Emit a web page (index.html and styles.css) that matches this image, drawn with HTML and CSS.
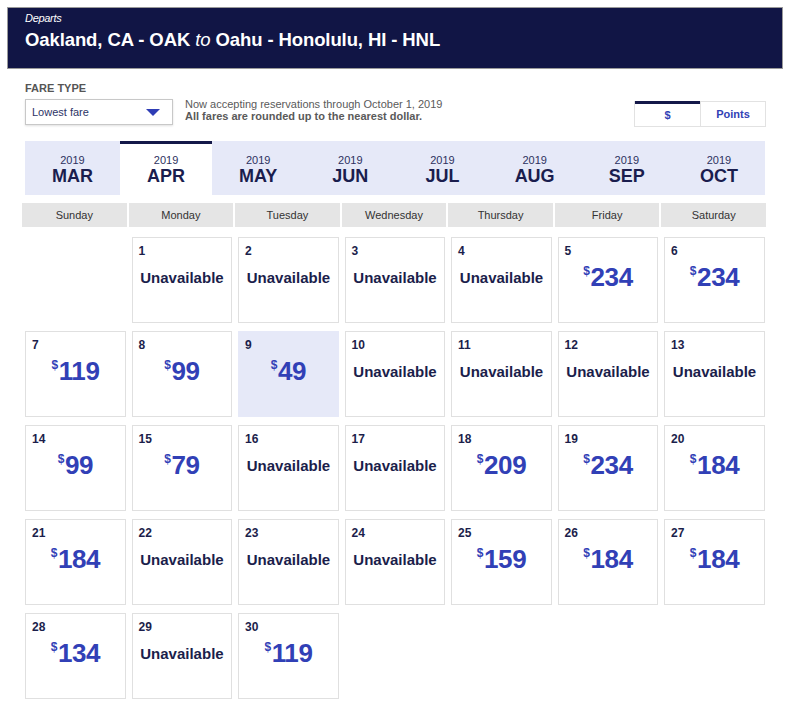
FILE: index.html
```html
<!DOCTYPE html>
<html>
<head>
<meta charset="utf-8">
<link rel="stylesheet" href="styles.css">
</head>
<body>
<div class="page">
  <header class="route">
    <div class="departs">Departs</div>
    <h1 class="title">Oakland, CA - OAK <span class="to">to</span> Oahu - Honolulu, HI - HNL</h1>
  </header>

  <section class="controls">
    <div class="fare">
      <div class="fare-label">FARE TYPE</div>
      <div class="fare-row">
        <div class="select">
          <span>Lowest fare</span>
          <svg class="caret" width="14" height="7" viewBox="0 0 14 7"><path d="M0 0 L14 0 L7 7 Z" fill="#2f3db5"/></svg>
        </div>
        <div class="note">
          <div>Now accepting reservations through October 1, 2019</div>
          <div class="note-bold">All fares are rounded up to the nearest dollar.</div>
        </div>
      </div>
    </div>
    <div class="toggle">
      <div class="tog active">$</div>
      <div class="tog">Points</div>
    </div>
  </section>

  <nav class="months">
    <div class="month"><span class="yr">2019</span><span class="mo">MAR</span></div>
    <div class="month current"><span class="yr">2019</span><span class="mo">APR</span></div>
    <div class="month"><span class="yr">2019</span><span class="mo">MAY</span></div>
    <div class="month"><span class="yr">2019</span><span class="mo">JUN</span></div>
    <div class="month"><span class="yr">2019</span><span class="mo">JUL</span></div>
    <div class="month"><span class="yr">2019</span><span class="mo">AUG</span></div>
    <div class="month"><span class="yr">2019</span><span class="mo">SEP</span></div>
    <div class="month"><span class="yr">2019</span><span class="mo">OCT</span></div>
  </nav>

  <div class="weekdays">
    <div>Sunday</div><div>Monday</div><div>Tuesday</div><div>Wednesday</div><div>Thursday</div><div>Friday</div><div>Saturday</div>
  </div>

  <div class="grid">
    <div class="empty"></div>
    <div class="day"><span class="n">1</span><span class="na">Unavailable</span></div>
    <div class="day"><span class="n">2</span><span class="na">Unavailable</span></div>
    <div class="day"><span class="n">3</span><span class="na">Unavailable</span></div>
    <div class="day"><span class="n">4</span><span class="na">Unavailable</span></div>
    <div class="day"><span class="n">5</span><span class="price"><sup>$</sup>234</span></div>
    <div class="day"><span class="n">6</span><span class="price"><sup>$</sup>234</span></div>

    <div class="day"><span class="n">7</span><span class="price"><sup>$</sup>119</span></div>
    <div class="day"><span class="n">8</span><span class="price"><sup>$</sup>99</span></div>
    <div class="day sel"><span class="n">9</span><span class="price"><sup>$</sup>49</span></div>
    <div class="day"><span class="n">10</span><span class="na">Unavailable</span></div>
    <div class="day"><span class="n">11</span><span class="na">Unavailable</span></div>
    <div class="day"><span class="n">12</span><span class="na">Unavailable</span></div>
    <div class="day"><span class="n">13</span><span class="na">Unavailable</span></div>

    <div class="day"><span class="n">14</span><span class="price"><sup>$</sup>99</span></div>
    <div class="day"><span class="n">15</span><span class="price"><sup>$</sup>79</span></div>
    <div class="day"><span class="n">16</span><span class="na">Unavailable</span></div>
    <div class="day"><span class="n">17</span><span class="na">Unavailable</span></div>
    <div class="day"><span class="n">18</span><span class="price"><sup>$</sup>209</span></div>
    <div class="day"><span class="n">19</span><span class="price"><sup>$</sup>234</span></div>
    <div class="day"><span class="n">20</span><span class="price"><sup>$</sup>184</span></div>

    <div class="day"><span class="n">21</span><span class="price"><sup>$</sup>184</span></div>
    <div class="day"><span class="n">22</span><span class="na">Unavailable</span></div>
    <div class="day"><span class="n">23</span><span class="na">Unavailable</span></div>
    <div class="day"><span class="n">24</span><span class="na">Unavailable</span></div>
    <div class="day"><span class="n">25</span><span class="price"><sup>$</sup>159</span></div>
    <div class="day"><span class="n">26</span><span class="price"><sup>$</sup>184</span></div>
    <div class="day"><span class="n">27</span><span class="price"><sup>$</sup>184</span></div>

    <div class="day"><span class="n">28</span><span class="price"><sup>$</sup>134</span></div>
    <div class="day"><span class="n">29</span><span class="na">Unavailable</span></div>
    <div class="day"><span class="n">30</span><span class="price"><sup>$</sup>119</span></div>
  </div>
</div>
</body>
</html>
```

FILE: styles.css
```css
* { box-sizing: border-box; }
html, body { margin: 0; padding: 0; background: #fff; }
body { font-family: "Liberation Sans", Arial, sans-serif; color: #1b1e4b; }

.page { padding: 7px 9px 0 7px; width: 792px; }

.route {
  background: #111545;
  border: 1px solid #9a9a9a;
  height: 62px;
  padding: 4px 0 0 17px;
  color: #fff;
}
.departs { font-size: 11px; font-style: italic; letter-spacing: -0.3px; line-height: 13px; }
.title { margin: 4px 0 0; font-size: 18.5px; font-weight: bold; line-height: 22px; letter-spacing: -0.1px; }
.to { font-style: italic; font-weight: normal; }

.controls {
  display: flex;
  justify-content: space-between;
  align-items: flex-end;
  padding: 13px 17px 0 18px;
}
.fare-label { font-size: 11px; font-weight: bold; color: #555; line-height: 13px; }
.fare-row { display: flex; align-items: center; margin-top: 4px; gap: 12px; }
.select {
  width: 148px; height: 26px;
  border: 1px solid #c8c8c8;
  box-shadow: 0 1px 2px rgba(0,0,0,0.12);
  display: flex; align-items: center; justify-content: space-between;
  padding: 0 12px 0 6px;
  font-size: 11px; color: #2c3366;
}
.caret { margin-top: 1px; }
.note { font-size: 11px; color: #5a5a5a; line-height: 12px; margin-top: -4px; }
.note-bold { font-weight: bold; }

.toggle { display: flex; border: 1px solid #e2e2e2; height: 26px; margin-bottom: -2px; }
.tog {
  width: 65px; display: flex; align-items: center; justify-content: center;
  font-size: 11px; font-weight: bold; color: #3142b5;
}
.tog + .tog { border-left: 1px solid #e2e2e2; }
.tog.active { border-top: 3px solid #141849; margin-top: -1px; }

.months {
  display: grid; grid-template-columns: 95px repeat(7, 1fr);
  margin: 16px 18px 0 18px;
  background: #e6e9f8;
  height: 54px;
}
.month { display: flex; flex-direction: column; align-items: center; justify-content: center; padding-top: 3px; }
.month.current { background: #fff; border-top: 3px solid #141849; padding-top: 0; }
.yr { font-size: 11px; color: #2d3160; line-height: 12px; }
.mo { font-size: 18px; font-weight: bold; color: #1a1d4e; line-height: 20px; }

.weekdays {
  display: grid; grid-template-columns: repeat(7, 1fr); gap: 2px;
  margin: 8px 17px 0 15px;
}
.weekdays div {
  background: #e5e5e5; height: 24px;
  display: flex; align-items: center; justify-content: center;
  font-size: 11px; color: #333;
}

.grid {
  display: grid; grid-template-columns: repeat(7, 1fr);
  column-gap: 5.6px; row-gap: 8px;
  margin: 10px 18px 0 18px;
}
.day {
  height: 86px;
  border: 1px solid #e0e0e0;
  display: flex; flex-direction: column; align-items: center;
  padding: 6px 6px 0 6px;
}
.day.sel { background: #e6e9f8; border-color: #e6e9f8; }
.n { align-self: flex-start; font-size: 12px; font-weight: bold; color: #1b1e4b; line-height: 14px; }
.na { font-size: 15px; font-weight: bold; color: #1b1e4b; margin-top: 11px; line-height: 18px; }
.price { font-size: 26px; font-weight: bold; color: #3140b6; margin-top: 4px; line-height: 30px; letter-spacing: -0.4px; }
.price sup { font-size: 12px; vertical-align: top; position: relative; top: 0; margin-right: 1px; line-height: 18px; }
```
